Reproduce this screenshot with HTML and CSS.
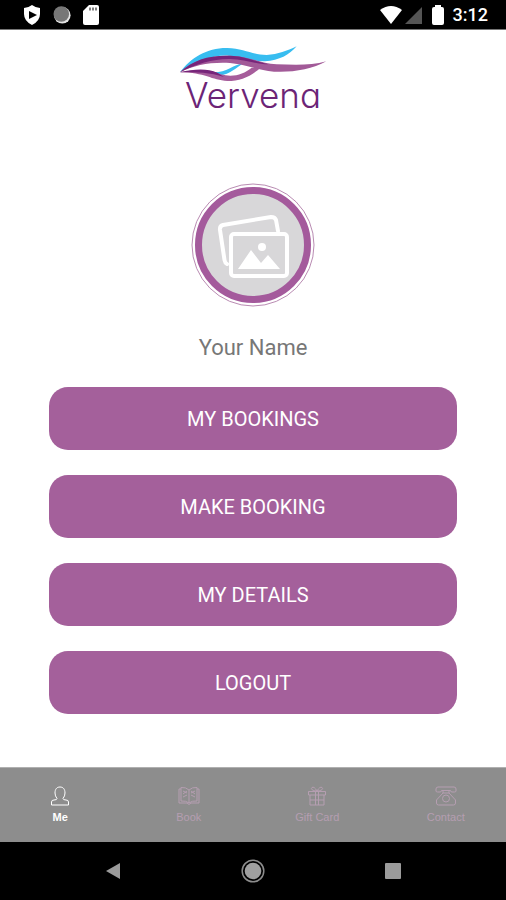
FILE: index.html
```html
<!DOCTYPE html>
<html lang="en">
<head>
<meta charset="utf-8">
<meta name="viewport" content="width=device-width, initial-scale=1">
<title>Vervena</title>
<link rel="stylesheet" href="styles.css">
</head>
<body>
<header class="status">
  <div class="status-left">
    <svg width="18" height="20" viewBox="0 0 18 20" aria-hidden="true"><path fill="#fff" d="M9 0 Q13 3 17 3 V9 Q17 16 9 20 Q1 16 1 9 V3 Q5 3 9 0Z"/><path d="M6 6 L14 10 L6 14Z"/></svg>
    <svg width="18" height="18" viewBox="0 0 18 18" aria-hidden="true"><circle cx="9.300" cy="9.300" r="8.300" fill="#e4e4e4"/><circle cx="8.300" cy="8" r="7.800" fill="#777"/></svg>
    <svg width="16" height="20" viewBox="0 0 16 20" aria-hidden="true"><path fill="#fff" d="M6 0 H14 Q16 0 16 2 V18 Q16 20 14 20 H2 Q0 20 0 18 V6Z"/><path stroke="#555" stroke-width="1.500" d="M7 2.500 V5.500 M10 2.500 V5.500 M13 2.500 V5.500"/></svg>
  </div>
  <div class="status-right">
    <svg class="wifi" width="24" height="18" viewBox="0 0 24 18" aria-hidden="true"><path fill="#fff" d="M1 4 Q12 -4 23 4 L12 18Z"/></svg>
    <svg class="signal" width="17" height="17" viewBox="0 0 17 17" aria-hidden="true"><path fill="#555" d="M17 0 V17 H0Z"/></svg>
    <svg class="battery" width="12" height="20" viewBox="0 0 12 20" aria-hidden="true"><path fill="#fff" d="M3 0 H9 V2 H10 Q12 2 12 4 V18 Q12 20 10 20 H2 Q0 20 0 18 V4 Q0 2 2 2 H3Z"/></svg>
    <time>3:12</time>
  </div>
</header>
<main class="profile">
  <h1 class="logo">
    <svg width="150" height="38" viewBox="24 21 450 114" aria-hidden="true">
      <path fill="#38bdf0" d="M30 106 C62 62 112 32 172 33 C222 35 250 54 290 54 C325 52 350 42 380 28 C358 54 328 70 285 73 C240 74 215 58 175 56 C125 54 75 76 30 106Z"/>
      <path fill="#38bdf0" d="M132 106 C170 106 188 84 222 78 C198 92 180 112 150 115Z"/>
      <path fill="#a65d9b" d="M30 106 C75 97 120 96 152 112 C190 122 220 112 245 92 L272 92 C242 118 212 132 172 132 C125 130 105 106 30 106Z"/>
      <path fill="#a25a98" d="M30 106 C70 68 125 54 190 57 C245 60 275 81 320 82 C375 84 425 86 469 73 C425 98 365 107 312 104 C255 98 228 82 180 78 C120 75 75 84 30 106Z"/>
      <path fill="#77257a" d="M30 106 C72 66 125 53 190 57 C225 58 265 76 295 82 C260 82 225 67 180 66 C130 65 80 80 30 106Z M30 106 C72 96 112 94 142 107 L162 120 C120 106 82 106 30 106Z"/>
    </svg>
    <span class="wordmark">Vervena</span>
  </h1>
  <svg class="avatar" width="124" height="124" viewBox="0 0 124 124" role="img" aria-label="Profile photo">
    <circle cx="62" cy="62" r="61" fill="#fff" stroke="#b98bb2"/>
    <circle cx="62" cy="62" r="54.500" fill="#d8d7d9" stroke="#a45a9c" stroke-width="7"/>
    <g fill="none" stroke="#fff" stroke-width="4" stroke-linejoin="round">
      <path stroke-linecap="round" d="M36 81 Q34 80 33.500 77 L29 47 Q28.500 43 32 42 L80 34 Q84 34 85 37 L87 48"/>
      <rect x="40" y="51" width="56" height="42" rx="3" fill="#d8d7d9"/>
    </g>
    <circle cx="71" cy="64" r="4" fill="#fff"/>
    <path fill="#fff" d="M47 86 L60 67 L70 80 L77 72 L89 86Z"/>
  </svg>
  <p class="name">Your Name</p>
  <div class="actions">
    <button type="button">MY BOOKINGS</button>
    <button type="button">MAKE BOOKING</button>
    <button type="button">MY DETAILS</button>
    <button type="button">LOGOUT</button>
  </div>
</main>
<nav class="tabs" aria-label="Main">
  <ul>
    <li><a class="active" href="#me"><svg width="22" height="22" viewBox="0 0 22 22" aria-hidden="true"><path d="M11 2 C7.500 2 6 4.500 6 8 Q6 11 8 13.500 Q8 15 5 15 Q2.500 15 2.500 17 V20 H19.500 V17 Q19.500 15 17 15 Q14 15 14 13.500 Q16 11 16 8 C16 4.500 14.500 2 11 2Z"/></svg>Me</a></li>
    <li><a href="#book"><svg width="22" height="22" viewBox="0 0 22 22" aria-hidden="true"><path d="M11 5 Q8 2 3 2.500 V16 Q8 15.500 11 18 Q14 15.500 19 16 V2.500 Q14 2 11 5Z V18 M3 4 H1 V18 H9 L11 19.500 L13 18 H21 V4 H19 M5 6 L9 8 M9 6 L5 9 M5 12 L9 10 M13 8 L17 6 M13 6 L17 9 M13 10 L17 12"/></svg>Book</a></li>
    <li><a href="#gift"><svg width="22" height="22" viewBox="0 0 22 22" aria-hidden="true"><path d="M2.500 6.500 H19.500 V10 H2.500Z M4 10 V20 H18 V10 M9.500 6.500 V20 M12.500 6.500 V20 M4 15 H18 M11 6 C7 6 4 4 6 2.500 Q8 1 11 6 Q14 1 16 2.500 C18 4 15 6 11 6"/></svg>Gift Card</a></li>
    <li><a href="#contact"><svg width="22" height="22" viewBox="0 0 22 22" aria-hidden="true"><path d="M3 2 H19 Q21 2 21 4 V6 Q21 7 19.500 7 H17 Q15.500 7 15.500 5.500 H6.500 Q6.500 7 5 7 H2.500 Q1 7 1 6 V4 Q1 2 3 2Z M8 6 V8 L1.500 15 V18 Q1.500 20 3.500 20 H18.500 Q20.500 20 20.500 18 V15 L14 8 V6 M8 8 H14"/><circle cx="11" cy="13.500" r="3.500"/></svg>Contact</a></li>
  </ul>
</nav>
<footer class="system">
  <button type="button" aria-label="Back"><svg width="16" height="18" viewBox="0 0 16 18"><path fill="#9b9b9b" d="M15 1 V17 L1 9Z"/></svg></button>
  <button type="button" aria-label="Home"><svg width="24" height="24" viewBox="0 0 24 24"><circle cx="12" cy="12" r="10.800" fill="none" stroke="#8c8c8c" stroke-width="1.500"/><circle cx="12" cy="12" r="8.300" fill="#a0a0a0"/></svg></button>
  <button type="button" aria-label="Recent apps"><svg width="16" height="16" viewBox="0 0 16 16"><rect width="16" height="16" rx="1" fill="#9b9b9b"/></svg></button>
</footer>
</body>
</html>
```
FILE: styles.css
```css
* { box-sizing: border-box; }

body {
  margin: 0;
  min-height: 100vh;
  display: flex;
  flex-direction: column;
  background: #fff;
  font-family: Roboto, "Liberation Sans", sans-serif;
}

svg { display: block; flex: none; }

.status {
  display: flex;
  justify-content: space-between;
  align-items: center;
  height: 30px;
  padding: 1px 18px 0 23px;
  background: #000;
  border-bottom: 1px solid #777;
}

.status-left, .status-right { display: flex; align-items: center; }
.status-left { gap: 12px; }
.status-right { color: #fff; font-size: 18px; line-height: 20px; font-weight: 500; }
.signal { margin-left: 2px; }
.battery { margin: 0 9px 0 10px; }

.profile {
  flex: 1;
  display: flex;
  flex-direction: column;
  align-items: center;
  padding: 14px 49px 24px;
}

.logo {
  margin: 0;
  display: flex;
  flex-direction: column;
  align-items: center;
  color: #6c2476;
}

.wordmark {
  font-family: Inter, Lato, sans-serif;
  font-feature-settings: "cv11";
  font-size: 35px;
  line-height: 26px;
  font-weight: 300;
}

.avatar { margin-top: 75px; }

.name {
  margin: 27px 0 25px;
  font-size: 22px;
  line-height: 28px;
  color: #777;
}

.actions {
  align-self: stretch;
  display: flex;
  flex-direction: column;
  gap: 25px;
}

.actions button {
  height: 63px;
  border: 0;
  border-radius: 19px;
  background: #a4609b;
  color: #fff;
  font: 400 20px/24px Roboto, "Liberation Sans", sans-serif;
}

.tabs {
  overflow: hidden;
  background: #8d8d8d;
  border-top: 1px solid #b0b0b0;
}

.tabs ul {
  display: flex;
  height: 74px;
  margin: 0 -4px;
  padding: 0;
  list-style: none;
}

.tabs li { flex: 1; }

.tabs a {
  display: flex;
  flex-direction: column;
  align-items: center;
  gap: 4px;
  padding-top: 17px;
  color: #b59eb1;
  font: 11px/12px "Liberation Sans", sans-serif;
  text-decoration: none;
}

.tabs svg { fill: none; stroke: currentColor; stroke-width: 1; }
.tabs .active { color: #fff; font-weight: 700; }

.system {
  display: flex;
  height: 58px;
  padding: 0 43px;
  background: #000;
}

.system button {
  flex: 1;
  display: flex;
  justify-content: center;
  align-items: center;
  padding: 0;
  border: 0;
  background: none;
}
```
